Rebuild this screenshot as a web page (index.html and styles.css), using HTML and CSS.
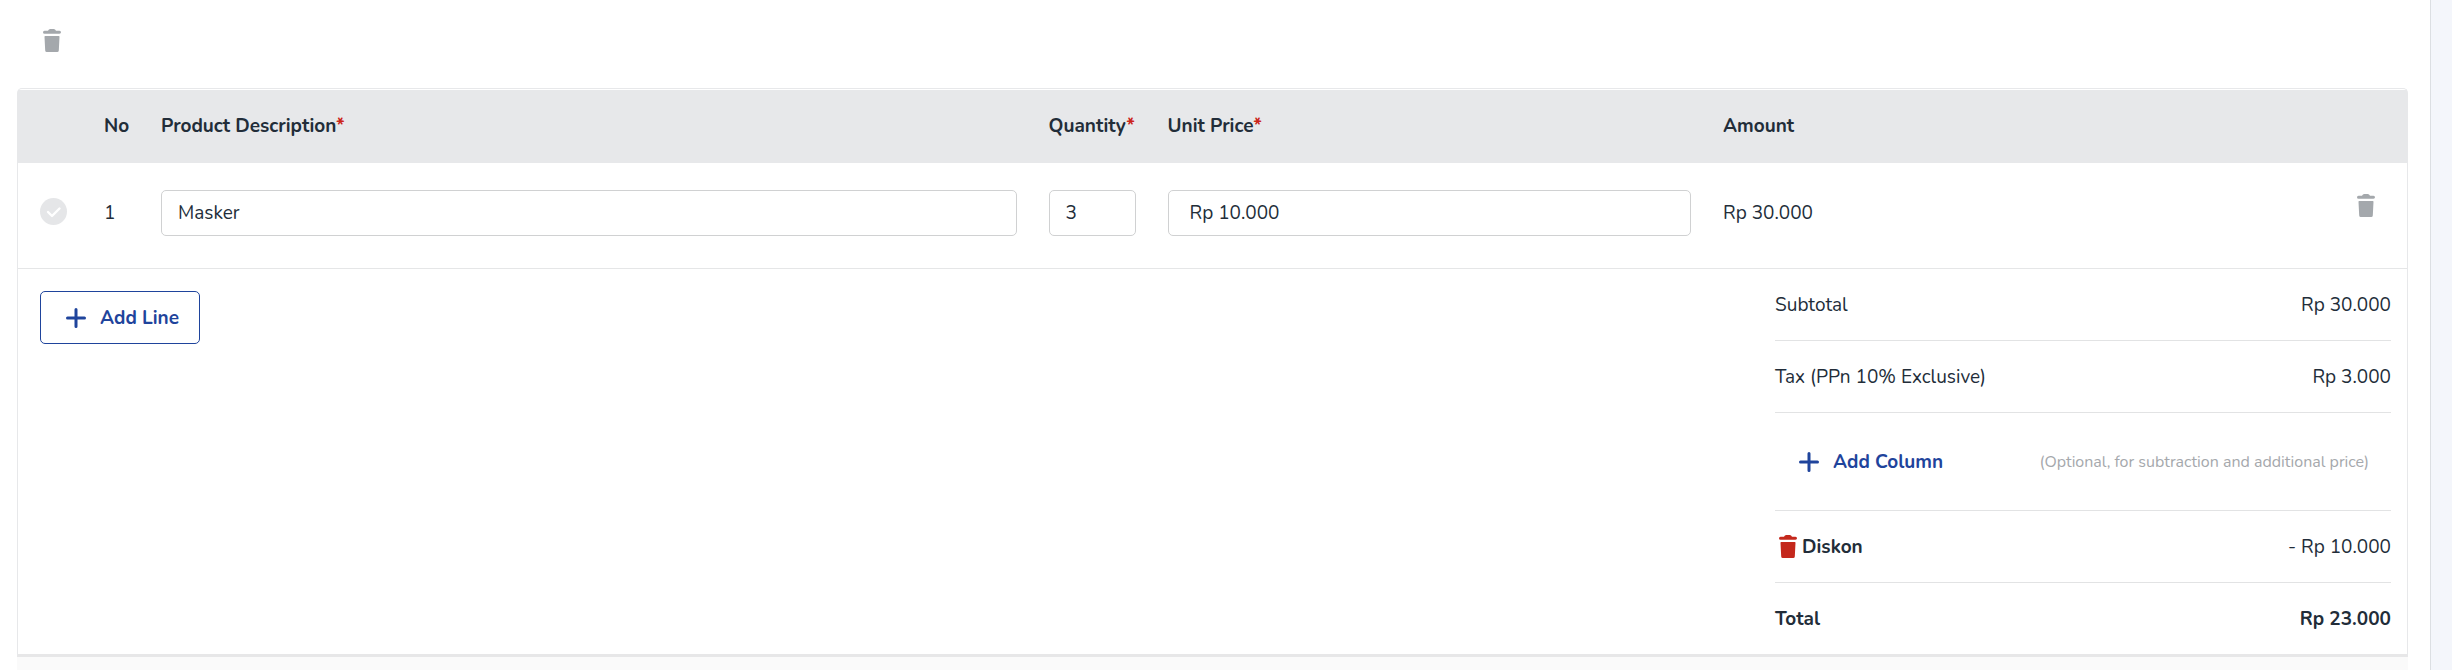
FILE: index.html
```
<!DOCTYPE html>
<html lang="en">
<head>
<meta charset="utf-8">
<meta name="viewport" content="width=device-width, initial-scale=1">
<title>Product lines</title>
<link rel="stylesheet" href="styles.css">
</head>
<body>
<svg class="sprite" aria-hidden="true">
  <symbol id="trash" viewBox="0 0 18 23">
    <path d="M1.500 1.700H5Q5.800 0 7.200 0h3.600Q12.200 0 13 1.700h3.500Q18 1.900 18 3.300T16.500 4.800h-15Q0 4.800 0 3.300T1.500 1.700Z"/>
    <path d="M2.200 7h13.600q.8 0 .7.800l-.7 13.700Q15.700 23 14.200 23H3.800Q2.300 23 2.200 21.500L1.500 7.800Q1.400 7 2.200 7Z"/>
  </symbol>
  <symbol id="plus" viewBox="0 0 20 20">
    <path d="M10 1.500v17M1.500 10h17" fill="none" stroke="currentColor" stroke-width="3" stroke-linecap="round"/>
  </symbol>
</svg>
<div class="page">
  <main class="content">
    <div class="toolbar">
      <button class="icon-button" type="button" aria-label="Delete selected"><svg class="trash"><use href="#trash"/></svg></button>
    </div>
    <form class="card">
      <table class="lines">
        <colgroup>
          <col class="col-check"><col class="col-no"><col class="col-desc"><col class="col-qty"><col class="col-price"><col><col class="col-action">
        </colgroup>
        <thead>
          <tr>
            <td></td>
            <th scope="col">No</th>
            <th scope="col"><label for="desc">Product Description<span class="required">*</span></label></th>
            <th scope="col"><label for="qty">Quantity<span class="required">*</span></label></th>
            <th scope="col"><label for="price">Unit Price<span class="required">*</span></label></th>
            <th scope="col">Amount</th>
            <td></td>
          </tr>
        </thead>
        <tbody>
          <tr>
            <td class="check-cell"><input class="check" type="checkbox" aria-label="Select line 1"></td>
            <td>1</td>
            <td><input class="field" id="desc" type="text" value="Masker"></td>
            <td><input class="field" id="qty" type="text" value="3"></td>
            <td><input class="field field-price" id="price" type="text" value="Rp 10.000"></td>
            <td>Rp 30.000</td>
            <td class="action-cell"><button class="icon-button" type="button" aria-label="Delete line 1"><svg class="trash"><use href="#trash"/></svg></button></td>
          </tr>
        </tbody>
      </table>
      <div class="footer">
        <button class="add add-line" type="button"><svg class="plus"><use href="#plus"/></svg>Add Line</button>
        <div class="summary">
          <div class="row"><span>Subtotal</span><span>Rp 30.000</span></div>
          <div class="row"><span>Tax (PPn 10% Exclusive)</span><span>Rp 3.000</span></div>
          <div class="row row-add">
            <button class="add" type="button"><svg class="plus"><use href="#plus"/></svg>Add Column</button>
            <span class="hint">(Optional, for subtraction and additional price)</span>
          </div>
          <div class="row">
            <span class="discount"><button class="icon-button danger" type="button" aria-label="Delete Diskon"><svg class="trash"><use href="#trash"/></svg></button><strong>Diskon</strong></span>
            <span>- Rp 10.000</span>
          </div>
          <div class="row"><strong>Total</strong><strong>Rp 23.000</strong></div>
        </div>
      </div>
    </form>
    <div class="below"></div>
  </main>
  <div class="gutter"></div>
</div>
</body>
</html>
```
FILE: styles.css
```
* { box-sizing: border-box; }

body {
  margin: 0;
  background: #fff;
  color: #222d39;
  font: 19px/24px Nunito, Lato, sans-serif;
}

.sprite { position: absolute; width: 0; height: 0; }

.page {
  display: grid;
  grid-template-columns: 1fr 22px;
  min-height: 100vh;
}

.gutter {
  background: #f4f6fb;
  border-left: 1px solid #dcdfe3;
}

.content {
  display: flex;
  flex-direction: column;
  padding: 0 22px 0 17px;
}

.toolbar { padding: 29px 26px 36px; }

.icon-button {
  display: block;
  padding: 0;
  border: 0;
  background: none;
  color: #a4a8ac;
}

.danger { color: #c4281c; }

.trash { display: block; width: 18px; height: 23px; fill: currentColor; }
.plus { width: 20px; height: 20px; }

.card {
  border: 1px solid #e7e8ea;
  border-bottom: 3px solid #e7e7e8;
  border-radius: 5px 5px 0 0;
  padding-top: 1px;
}

.below {
  flex: 1;
  min-height: 13px;
  background: #fafafa;
}

.lines {
  width: 100%;
  table-layout: fixed;
  border-collapse: collapse;
}

.col-check { width: 70px; }
.col-no { width: 57px; }
.col-desc { width: 37.15%; }
.col-qty { width: 119px; }
.col-price { width: 23.25%; }
.col-action { width: 82px; }

th, td { padding: 0 16px; text-align: left; }

thead tr { height: 73px; background: #e7e8ea; }
th { padding-bottom: 2px; font-weight: 700; }
.required { color: #cc2519; }

tbody tr { border-bottom: 1px solid #e5e6e7; }
tbody td { padding-top: 27px; padding-bottom: 32px; }
tbody .check-cell { padding: 0 22px 8px; }
tbody .action-cell { padding: 31px 32px; vertical-align: top; }

.check {
  appearance: none;
  display: block;
  width: 27px;
  height: 27px;
  margin: 0;
  border-radius: 50%;
  background: #e5e6e8 url("data:image/svg+xml,%3Csvg xmlns='http://www.w3.org/2000/svg' viewBox='0 0 27 27'%3E%3Cpath d='M8 14l4 4 7.500-7.500' fill='none' stroke='white' stroke-width='2.400' stroke-linecap='round' stroke-linejoin='round'/%3E%3C/svg%3E");
}

.field {
  display: block;
  width: 100%;
  height: 46px;
  padding: 0 16px;
  border: 1px solid #d0d1d2;
  border-radius: 5px;
  background: #fff;
  color: inherit;
  font: inherit;
}

.field-price { padding: 0 21px; }

.footer {
  display: flex;
  align-items: flex-start;
  justify-content: space-between;
  padding: 0 16px 0 22px;
}

.add {
  display: flex;
  align-items: center;
  gap: 14px;
  padding: 0 24px;
  border: 0;
  background: none;
  color: #1f449c;
  font: inherit;
  font-weight: 700;
}

.add-line {
  height: 53px;
  margin-top: 22px;
  padding: 0 20px 0 25px;
  border: 1px solid #1f449c;
  border-radius: 5px;
}

.summary { width: 26.2%; }

.row {
  display: flex;
  align-items: center;
  justify-content: space-between;
  height: 72px;
  border-bottom: 1px solid #e2e3e4;
}

.row:last-child { height: 71px; border-bottom: 0; }
.row-add { height: 98px; padding-right: 22px; }

.hint { color: #a5a8ac; font-size: 16px; }
.discount { display: flex; align-items: center; gap: 5px; padding-left: 4px; }
```
